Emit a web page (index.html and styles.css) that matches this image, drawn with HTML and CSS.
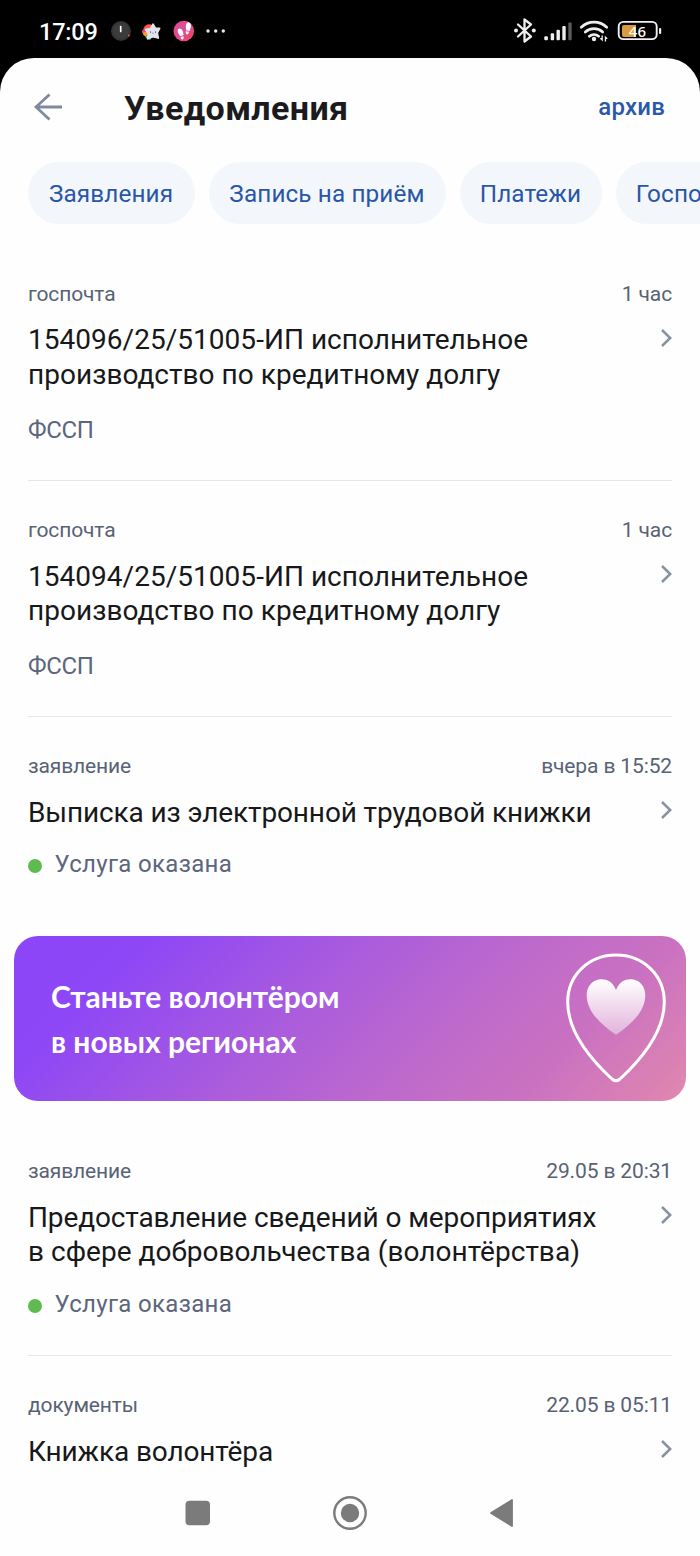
FILE: index.html
```html
<!DOCTYPE html>
<html lang="ru">
<head>
<meta charset="utf-8">
<title>Уведомления</title>
<link rel="stylesheet" href="styles.css">
</head>
<body>
<div class="phone">
  <div class="statusbar">
    <span class="clock">17:09</span>
    <svg class="tray" width="120" height="24" viewBox="110 19 120 24">
      <circle cx="121" cy="31" r="10" fill="#343434"/><circle cx="121" cy="31" r="8" fill="#3c3c3c"/>
      <path d="M120.700 26.500v5" stroke="#fff" stroke-width="1.700" stroke-linecap="round"/>
      <circle cx="128.800" cy="35.600" r="1" fill="#f0543c"/>
      <path d="M151 24.500a7 7 0 0 0-7.500 4l3 4 6-5z" fill="#ff5a3c"/>
      <path d="M144.500 28.500a4 4 0 0 0-2.500 4l5 2 1-4z" fill="#f03c8c"/>
      <path d="M142.500 32.500a5 5 0 0 0 3 4l4-3-2-2z" fill="#ff9a22"/>
      <path d="M145 36q1.500 4 5.500 3.800l1-5z" fill="#52c94c"/>
      <path d="M153 24.200L155.400 28.200L159.600 28.400L157.200 32.700L158.200 38L153 36.700L147.700 38.700L148.300 33.300L145.600 29.600L150.400 28.700Z" fill="#e3e3ee" stroke="#e3e3ee" stroke-width="1.800" stroke-linejoin="round"/>
      <path d="M150.500 31.500v1.200M155.500 31.500v1.200" stroke="#333b62" stroke-width="1"/>
      <path d="M152.400 33.200q.6 .8 1.200 0" stroke="#333b62" stroke-width=".6" fill="none"/>
      <circle cx="183.800" cy="31" r="10.300" fill="#e9488f"/><circle cx="183.800" cy="31" r="8.300" fill="#d84e9d"/>
      <path d="M190 38a10 10 0 0 0 3.500-7l-7 3-6 5z" fill="#ef4763"/>
      <g fill="#fff"><path d="M188.500 22.300c2.300.3 2.800 3 2.200 5.300l-1.200 3.300-3.300-.7c-.6-3.200-.5-8 2.300-7.900zM185.900 31.200l3 .6c-.3 2-1 2.800-2 2.600-1.200-.3-1.400-1.500-1-3.200z"/><path d="M179.300 28.500c2.300-.2 3.700 2.300 4 4.500l.1 2.200-3.200.7c-1.500-1.500-4.200-6.700-.9-7.400zM180.500 37l3-.7c.4 1.700.1 3-1 3.200-1.100.2-1.800-.8-2-2.500z"/></g>
      <g fill="#e8e8e8"><circle cx="208" cy="31" r="1.700"/><circle cx="215.700" cy="31" r="1.700"/><circle cx="223.300" cy="31" r="1.700"/></g>
    </svg>
    <svg class="radio" width="150" height="30" viewBox="512 16 150 30">
      <path d="M518 24.500l13 12-6.500 5V19.500l6.500 5-13 12" fill="none" stroke="#eee" stroke-width="2.300" stroke-linejoin="round" stroke-linecap="round"/>
      <circle cx="516" cy="30.500" r="2" fill="#eee"/><circle cx="533.800" cy="30.500" r="2" fill="#eee"/>
      <g fill="#eee"><rect x="544.300" y="36.300" width="3.600" height="3.900" rx="1"/><rect x="550.700" y="33.200" width="3.400" height="7" rx="1"/><rect x="556.500" y="29.700" width="3.400" height="10.500" rx="1"/><rect x="562.300" y="26" width="3.400" height="14.200" rx="1"/></g>
      <rect x="568.300" y="22.500" width="3.400" height="17.700" rx="1" fill="#5a5a5a"/>
      <g fill="none" stroke="#eee" stroke-width="2.700" stroke-linecap="round"><path d="M581.300 27.200a18.500 18.500 0 0 1 25.400 0"/><path d="M585.300 32a12.800 12.800 0 0 1 17.400 0"/><path d="M589.300 36.200a7.500 7.500 0 0 1 9.400 0"/></g>
      <circle cx="594" cy="39" r="2.200" fill="#eee"/>
      <path d="M602.800 35.600v5.800l-2.600-2.300v-1h1.300v-2.500zM604.800 41.500v-5.800l2.600 2.200v1h-1.300v2.600z" fill="#eee"/>
      <rect x="618.700" y="21.900" width="38" height="17.200" rx="4.700" fill="none" stroke="#f2f2f2" stroke-width="1.900"/>
      <path d="M624 25h12v12h-12a2 2 0 0 1-2-2v-8a2 2 0 0 1 2-2z" fill="#d99b3c"/>
      <rect x="659" y="28" width="2.200" height="6" rx="1" fill="#eee"/>
      <text class="charge" x="637.400" y="37" text-anchor="middle">46</text>
    </svg>
  </div>

  <div class="sheet">
    <header class="header">
      <svg class="back" width="28" height="28" viewBox="0 0 28 28"><path d="M15.500 1.500L2 14l13.500 12.500M2 14h26" fill="none" stroke="#8089a0" stroke-width="2.800"/></svg>
      <h1 class="heading">Уведомления</h1>
      <a class="archive">архив</a>
    </header>

    <nav class="chips">
      <span class="chip chip-a">Заявления</span>
      <span class="chip chip-b">Запись на приём</span>
      <span class="chip chip-c">Платежи</span>
      <span class="chip chip-d">Госпочта</span>
    </nav>

    <main class="feed">
      <article class="item">
        <div class="meta"><span>госпочта</span><span>1 час</span></div>
        <div class="row"><h2 class="title">154096/25/51005-ИП исполнительное<br>производство по кредитному долгу</h2>
          <svg class="chevron" width="11" height="18" viewBox="0 0 11 18"><path d="M1 1L9.200 9L1 17"/></svg></div>
        <p class="sender">ФССП</p>
      </article>
      <article class="item">
        <div class="meta"><span>госпочта</span><span>1 час</span></div>
        <div class="row"><h2 class="title">154094/25/51005-ИП исполнительное<br>производство по кредитному долгу</h2>
          <svg class="chevron" width="11" height="18" viewBox="0 0 11 18"><path d="M1 1L9.200 9L1 17"/></svg></div>
        <p class="sender">ФССП</p>
      </article>
      <article class="item item-last">
        <div class="meta"><span>заявление</span><span>вчера в 15:52</span></div>
        <div class="row"><h2 class="title title-snug">Выписка из электронной трудовой книжки</h2>
          <svg class="chevron" width="11" height="18" viewBox="0 0 11 18"><path d="M1 1L9.200 9L1 17"/></svg></div>
        <p class="status"><i class="dot"></i>Услуга оказана</p>
      </article>

      <section class="banner">
        <p class="banner-text">Станьте волонтёром<br>в новых регионах</p>
        <svg class="pin" width="104" height="132" viewBox="0 0 104 132">
          <defs><linearGradient id="heart" x1="0" y1="0" x2="0" y2="1"><stop offset="0" stop-color="#fff"/><stop offset="1" stop-color="#e2b2da"/></linearGradient></defs>
          <path d="M52 3C79 3 100.300 23 100.300 50C100.300 76 82 103 56 127Q52 130.500 48 127C22 103 3.700 76 3.700 50C3.700 23 25 3 52 3z" fill="none" stroke="#fff" stroke-width="3"/>
          <path d="M52 38C55 30 61 27.300 66.500 27.300C75 27.300 81.300 34 81.300 43C81.300 59 68 72 52 82.700C36 72 22.700 59 22.700 43C22.700 34 29 27.300 37.500 27.300C43 27.300 49 30 52 38z" fill="url(#heart)"/>
        </svg>
      </section>

      <article class="item item-status">
        <div class="meta"><span>заявление</span><span>29.05 в 20:31</span></div>
        <div class="row"><h2 class="title"><span class="title-snug">Предоставление сведений о мероприятиях</span><br>в сфере добровольчества (волонтёрства)</h2>
          <svg class="chevron" width="11" height="18" viewBox="0 0 11 18"><path d="M1 1L9.200 9L1 17"/></svg></div>
        <p class="status"><i class="dot"></i>Услуга оказана</p>
      </article>
      <article class="item item-last">
        <div class="meta"><span>документы</span><span>22.05 в 05:11</span></div>
        <div class="row"><h2 class="title title-snug">Книжка волонтёра</h2>
          <svg class="chevron" width="11" height="18" viewBox="0 0 11 18"><path d="M1 1L9.200 9L1 17"/></svg></div>
      </article>
    </main>

    <footer class="navbar">
      <svg width="36" height="36" viewBox="0 0 36 36"><rect x="5.500" y="5.800" width="24.500" height="24.500" rx="4" fill="#7b7b7b"/></svg>
      <svg width="36" height="36" viewBox="0 0 36 36"><circle cx="18" cy="18" r="15.700" fill="none" stroke="#7b7b7b" stroke-width="2.400"/><circle cx="18" cy="18" r="9.200" fill="#7b7b7b"/></svg>
      <svg width="36" height="36" viewBox="0 0 36 36"><path d="M7 18L28 5v26z" fill="#7b7b7b" stroke="#7b7b7b" stroke-width="1.800" stroke-linejoin="round"/></svg>
    </footer>
  </div>
</div>
</body>
</html>
```

FILE: styles.css
```css
* { box-sizing: border-box; }
body { margin: 0; background: #000; font-family: Roboto, sans-serif; }
h1, h2, p { margin: 0; font-weight: 400; }
svg { display: block; flex: none; }

.phone { width: 700px; height: 1556px; overflow: hidden; display: flex; flex-direction: column; }

.statusbar { height: 58px; flex: none; display: flex; align-items: flex-start; padding: 16px 38px 0 39px; color: #fff; }
.clock { width: 71px; font-size: 23.500px; font-weight: 500; line-height: 32px; letter-spacing: -.2px; }
.tray { margin-top: 3px; }
.radio { margin-left: auto; }
.charge { font: 500 15px "Noto Sans", sans-serif; fill: #fff; }

.sheet { flex: 1; min-height: 0; display: flex; flex-direction: column; background: #fefefe; border-radius: 34px 34px 0 0; overflow: hidden; }

.header { height: 104px; flex: none; display: flex; align-items: center; padding: 0 35px 6px 34px; }
.back { margin-top: -1px; }
.heading { margin-left: 62px; padding-top: 1px; font-size: 34px; font-weight: 700; line-height: 44px; color: #1b1b1d; letter-spacing: .4px; }
.archive { margin-left: auto; font-size: 24px; font-weight: 500; color: #2c58a8; letter-spacing: .2px; }

.chips { display: flex; flex: none; gap: 14px; padding-left: 27.500px; height: 62px; }
.chip { flex: none; height: 62px; border-radius: 31px; background: #f3f7fc; color: #2a56a6; font-size: 24.300px; line-height: 63px; text-align: center; white-space: nowrap; letter-spacing: .12px; }
.chip-a { width: 167px; }
.chip-b { width: 237px; }
.chip-c { width: 142px; }
.chip-d { width: 145px; }

.feed { flex: 1; min-height: 0; padding-top: 21.200px; overflow: hidden; }
.item { margin: 0 28px; padding: 35.800px 0 35.200px; border-bottom: 1px solid #e6e7ea; }
.meta { display: flex; justify-content: space-between; font-size: 21px; line-height: 26px; color: #596275; letter-spacing: -.13px; }
.row { display: flex; justify-content: space-between; margin-top: 16.500px; }
.title { font-size: 28px; line-height: 34.600px; color: #17181a; letter-spacing: .03px; white-space: nowrap; }
.title-snug { letter-spacing: -.12px; }
.chevron { margin-top: 5.300px; }
.chevron path { fill: none; stroke: #8890a4; stroke-width: 2.500; }
.sender { margin-top: 22.400px; font-size: 24px; line-height: 30px; color: #5c667c; letter-spacing: -.3px; }
.status { display: flex; align-items: center; margin-top: 19.200px; font-size: 24px; line-height: 30px; color: #5c667c; letter-spacing: .33px; }
.dot { width: 14px; height: 14px; margin: 3px 13px 0 -.5px; border-radius: 50%; background: #5fbb50; }
.item-status { padding-bottom: 36.300px; }
.item-last { border-bottom: 0; padding-bottom: 0; }

.banner { margin: 56.600px 14px 21.400px; height: 165px; border-radius: 24px; display: flex; justify-content: space-between; padding: 16px 18.500px 0 37px; background: linear-gradient(135deg, #8c46f8 0%, #8d47f6 16%, #a75adf 40%, #bd69cd 62%, #ca72c0 80%, #e188ae 100%); }
.banner-text { padding-top: 22px; font: 700 30px/45px Lato, sans-serif; color: #fff; }

.navbar { height: 86px; flex: none; display: flex; justify-content: center; gap: 116px; padding-top: 25px; }
```
